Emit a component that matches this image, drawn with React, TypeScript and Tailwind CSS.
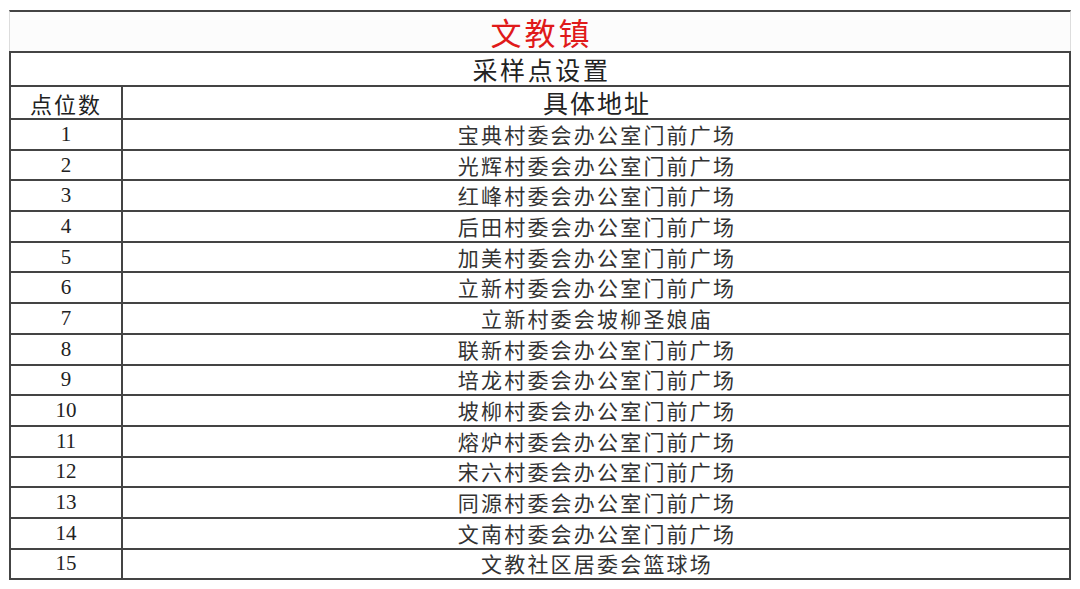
const rows = [
  "宝典村委会办公室门前广场",
  "光辉村委会办公室门前广场",
  "红峰村委会办公室门前广场",
  "后田村委会办公室门前广场",
  "加美村委会办公室门前广场",
  "立新村委会办公室门前广场",
  "立新村委会坡柳圣娘庙",
  "联新村委会办公室门前广场",
  "培龙村委会办公室门前广场",
  "坡柳村委会办公室门前广场",
  "熔炉村委会办公室门前广场",
  "宋六村委会办公室门前广场",
  "同源村委会办公室门前广场",
  "文南村委会办公室门前广场",
  "文教社区居委会篮球场",
];

const cjk = "font-['Noto_Sans_CJK_SC',sans-serif]";

export default function App() {
  return (
    <div className="h-[589px] w-[1080px] bg-white pl-[9px] pt-[10px]">
      <div className="w-[1062px] text-[#222]">
        <div
          className={`flex h-[41px] items-center justify-center border-x border-t-2 border-x-[#ddd] border-t-[#444] bg-[#fcfcfc] pl-[3px] text-[31px] leading-none tracking-[3px] text-[#e01a1a] ${cjk}`}
        >
          文教镇
        </div>
        <div
          className={`flex h-[34px] items-center justify-center border-x-2 border-t-2 border-[#444] pl-[3px] text-[25px] leading-none tracking-[2.6px] ${cjk}`}
        >
          采样点设置
        </div>
        <div className="flex h-[33px] border-x-2 border-t-2 border-[#444]">
          <div
            className={`flex w-[112px] items-center justify-center border-r-2 border-[#444] text-[22px] leading-none tracking-[2px] ${cjk}`}
          >
            点位数
          </div>
          <div
            className={`flex flex-1 items-center justify-center pl-[2px] text-[25px] leading-none tracking-[2px] ${cjk}`}
          >
            具体地址
          </div>
        </div>
        {rows.map((addr, i) => (
          <div
            key={i}
            className={`flex border-x-2 border-t-2 border-[#444] ${i === rows.length - 1 ? "h-[32.7px] border-b-2" : "h-[30.7px]"}`}
          >
            <div className="flex w-[112px] items-center justify-center border-r-2 border-[#444] font-['Liberation_Serif',serif] text-[21px] leading-none">
              {i + 1}
            </div>
            <div
              className={`flex flex-1 items-center justify-center pl-[2px] text-[21px] leading-none tracking-[2.2px] text-[#333] ${cjk}`}
            >
              {addr}
            </div>
          </div>
        ))}
      </div>
    </div>
  );
}
